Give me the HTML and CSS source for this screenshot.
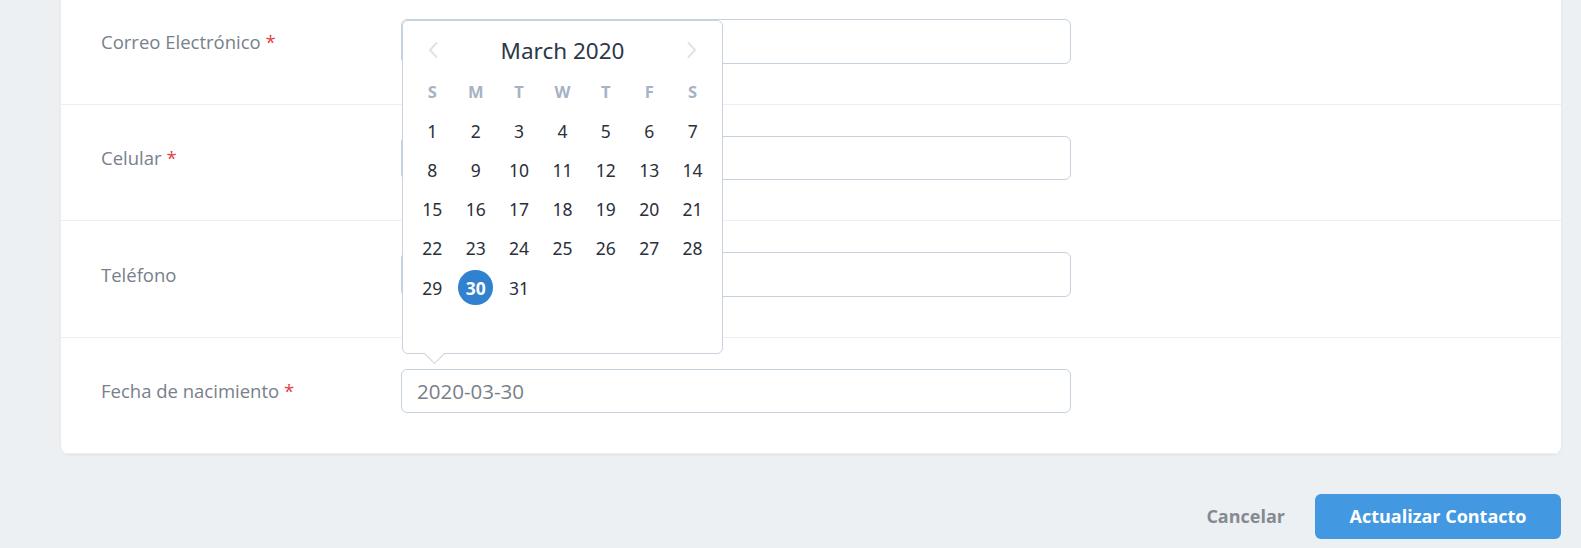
FILE: index.html
```html
<!DOCTYPE html>
<html lang="es">
<head>
<meta charset="utf-8">
<title>Contacto</title>
<link rel="stylesheet" href="styles.css">
</head>
<body>
<div class="page">
  <div class="card">
    <div class="row">
      <label class="label">Correo Electrónico <span class="req">*</span></label>
      <div class="input"></div>
    </div>
    <div class="row">
      <label class="label">Celular <span class="req">*</span></label>
      <div class="input"></div>
    </div>
    <div class="row">
      <label class="label">Teléfono</label>
      <div class="input"></div>
    </div>
    <div class="row">
      <label class="label">Fecha de nacimiento <span class="req">*</span></label>
      <div class="input"><span class="value">2020-03-30</span></div>
    </div>

    <div class="picker">
      <div class="picker-head">
        <svg class="chev" width="12" height="20" viewBox="0 0 12 20"><path d="M9.5 3 L3 10 L9.5 17" fill="none" stroke="#dfe3e8" stroke-width="2" stroke-linecap="round" stroke-linejoin="round"/></svg>
        <span class="month">March 2020</span>
        <svg class="chev" width="12" height="20" viewBox="0 0 12 20"><path d="M2.5 3 L9 10 L2.5 17" fill="none" stroke="#dfe3e8" stroke-width="2" stroke-linecap="round" stroke-linejoin="round"/></svg>
      </div>
      <div class="grid weekdays">
        <span>S</span><span>M</span><span>T</span><span>W</span><span>T</span><span>F</span><span>S</span>
      </div>
      <div class="grid days">
        <span>1</span><span>2</span><span>3</span><span>4</span><span>5</span><span>6</span><span>7</span>
        <span>8</span><span>9</span><span>10</span><span>11</span><span>12</span><span>13</span><span>14</span>
        <span>15</span><span>16</span><span>17</span><span>18</span><span>19</span><span>20</span><span>21</span>
        <span>22</span><span>23</span><span>24</span><span>25</span><span>26</span><span>27</span><span>28</span>
        <span>29</span><span><b class="sel">30</b></span><span>31</span>
      </div>
      <div class="tip"></div>
    </div>
  </div>

  <div class="actions">
    <button class="cancel">Cancelar</button>
    <button class="primary">Actualizar Contacto</button>
  </div>
</div>
</body>
</html>
```

FILE: styles.css
```css
* { box-sizing: border-box; }
html, body { margin: 0; height: 100%; overflow: hidden; }
body {
  background: #edf0f3;
  font-family: "Open Sans", "Noto Sans", sans-serif;
}
.page {
  padding: 0 20px 0 61px;
}
.card {
  position: relative;
  margin-top: -12px;
  background: #fff;
  border-radius: 8px;
  box-shadow: 0 1px 3px rgba(0,0,0,0.06);
}
.row {
  display: flex;
  align-items: center;
  padding: 31px 40px 40px;
  border-bottom: 1px solid #edf0f3;
}
.row:last-of-type { border-bottom: none; padding-bottom: 40px; }
.label {
  width: 300px;
  flex: none;
  font-size: 18.5px;
  color: #78808c;
}
.req { color: #e53e3e; }
.input {
  width: 670px;
  height: 44.5px;
  border: 1px solid #c5d1dc;
  border-radius: 6px;
  display: flex;
  align-items: center;
  padding: 0 15px;
}
.value {
  font-size: 20.5px;
  color: #7a7f88;
}

.picker {
  position: absolute;
  left: 341px;
  top: 32px;
  width: 321px;
  height: 334px;
  background: #fff;
  border: 1px solid #c9d3de;
  border-radius: 6px;
  padding: 11px 7.6px 0;
  font-family: "Noto Sans", "Open Sans", sans-serif;
}
.picker-head {
  height: 36px;
  display: flex;
  align-items: center;
  justify-content: space-between;
  padding: 0 16px;
  margin-bottom: 4px;
}
.month {
  font-size: 22.5px;
  font-weight: 400;
  color: #2d3748;
}
.grid {
  display: grid;
  grid-template-columns: repeat(7, 43.4px);
}
.grid span {
  height: 39.2px;
  display: flex;
  align-items: center;
  justify-content: center;
}
.weekdays span {
  font-size: 16.5px;
  font-weight: 700;
  color: #a6b3c4;
}
.days span {
  font-size: 17.5px;
  color: #2a303a;
}
.sel {
  width: 34.5px;
  height: 34.5px;
  border-radius: 50%;
  background: #3182ce;
  color: #fff;
  font-weight: 700;
  display: flex;
  align-items: center;
  justify-content: center;
}
.tip {
  position: absolute;
  left: 24px;
  bottom: -8px;
  width: 15px;
  height: 15px;
  background: #fff;
  border-right: 1px solid #c9d3de;
  border-bottom: 1px solid #c9d3de;
  transform: rotate(45deg);
}

.actions {
  display: flex;
  justify-content: flex-end;
  align-items: center;
  gap: 30px;
  margin-top: 39.5px;
}
button {
  font-family: "Open Sans", "Noto Sans", sans-serif;
  font-weight: 700;
  font-size: 18px;
  border: none;
  cursor: pointer;
}
.cancel {
  background: none;
  color: #858a92;
  padding: 0;
}
.primary {
  width: 246px;
  height: 45.5px;
  border-radius: 6px;
  background: #4299e1;
  color: #fff;
}
```
